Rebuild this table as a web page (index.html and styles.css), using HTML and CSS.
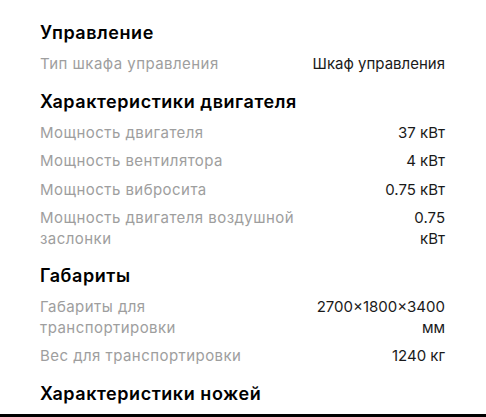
FILE: index.html
```html
<!DOCTYPE html>
<html lang="ru">
<head>
<meta charset="utf-8">
<title>Характеристики</title>
<link rel="stylesheet" href="styles.css">
</head>
<body>
<div class="specs">
  <section class="group">
    <h2 class="group-title">Управление</h2>
    <div class="row"><span class="label">Тип шкафа управления</span><span class="value">Шкаф управления</span></div>
  </section>
  <section class="group">
    <h2 class="group-title">Характеристики двигателя</h2>
    <div class="row"><span class="label">Мощность двигателя</span><span class="value">37 кВт</span></div>
    <div class="row"><span class="label">Мощность вентилятора</span><span class="value">4 кВт</span></div>
    <div class="row"><span class="label">Мощность вибросита</span><span class="value">0.75 кВт</span></div>
    <div class="row"><span class="label">Мощность двигателя воздушной заслонки</span><span class="value">0.75 кВт</span></div>
  </section>
  <section class="group">
    <h2 class="group-title">Габариты</h2>
    <div class="row"><span class="label">Габариты для транспортировки</span><span class="value">2700×1800×3400 мм</span></div>
    <div class="row"><span class="label">Вес для транспортировки</span><span class="value">1240 кг</span></div>
  </section>
  <section class="group">
    <h2 class="group-title">Характеристики ножей</h2>
    <div class="row"><span class="label">Количество подвижных ножей</span><span class="value">3 шт</span></div>
  </section>
</div>
<div class="bottom-bar"></div>
</body>
</html>
```
FILE: styles.css
```css
html, body {
  margin: 0;
  padding: 0;
  overflow: hidden;
  background: #ffffff;
}

body {
  font-family: Inter, "Noto Sans", sans-serif;
  color: #1a1a1a;
}

.specs {
  padding: 21px 41px 0 40px;
}

.group {
  margin-bottom: 11px;
}

.group-title {
  margin: 0 0 5px;
  font-size: 18px;
  line-height: 24px;
  font-weight: 600;
  letter-spacing: 0.55px;
  color: #000000;
}

.row {
  display: flex;
  justify-content: space-between;
  gap: 24px;
  padding: 4px 0;
  font-size: 15px;
  line-height: 20.5px;
}

.label {
  color: #9e9e9e;
  letter-spacing: 0.45px;
}

.value {
  color: #1a1a1a;
  text-align: right;
}

.bottom-bar {
  position: fixed;
  left: 0;
  right: 0;
  bottom: 0;
  height: 3px;
  background: #000000;
}
```
